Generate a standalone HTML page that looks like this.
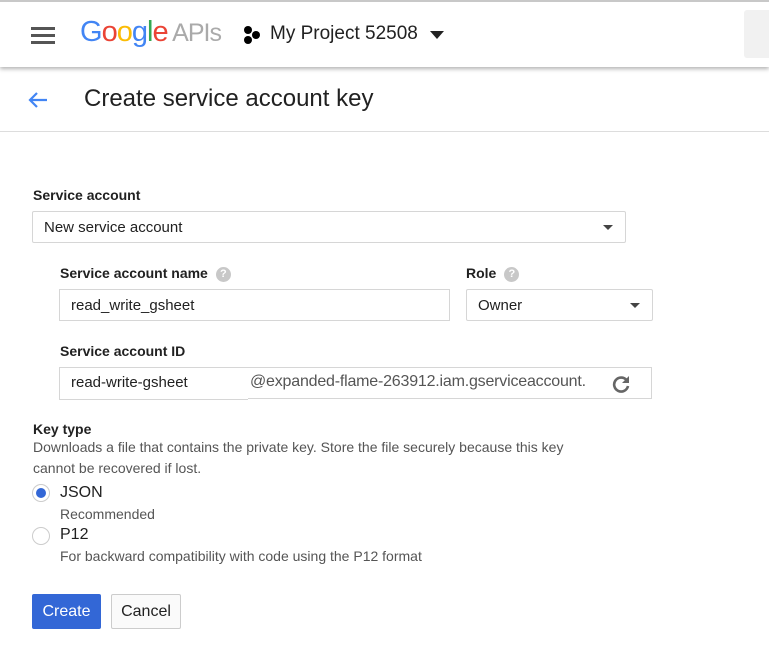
<!DOCTYPE html><html><head><style>
body{margin:0;width:769px;height:662px;background:#fff;font-family:"Liberation Sans",Arial,sans-serif;position:relative;overflow:hidden;color:#212121}
.a{position:absolute}
.box{position:absolute;border:1px solid #d6d6d6;box-sizing:border-box;font-size:15px;color:#212121;padding-left:11px;display:flex;align-items:center}
.lbl{position:absolute;font-size:14px;font-weight:bold;color:#212121}
.q{display:inline-block;width:15px;height:15px;border-radius:50%;background:#c8c8c8;color:#fff;font-size:11px;text-align:center;line-height:15px;vertical-align:1px;margin-left:8px}
.tri{position:absolute;width:0;height:0;border-left:5px solid transparent;border-right:5px solid transparent;border-top:5px solid #444}
</style></head><body>
<div class="a" style="left:0;top:0;width:769px;height:67px;background:#fff;border-top:2px solid #c8c8c8;box-sizing:border-box;box-shadow:0 2px 4px rgba(0,0,0,.3)"></div>
<div class="a" style="left:31px;top:27px;width:24px;height:3px;background:#555;box-shadow:0 7px 0 #555,0 14px 0 #555"></div>
<div class="a" style="left:80px;top:16px;font-size:29px;letter-spacing:-1px"><span style="color:#4285f4">G</span><span style="color:#ea4335">o</span><span style="color:#fbbc05">o</span><span style="color:#4285f4">g</span><span style="color:#34a853">l</span><span style="color:#ea4335">e</span><span style="color:#aaa;font-size:25px"> APIs</span></div>
<svg class="a" style="left:242px;top:25px" width="20" height="20"><circle cx="6" cy="5" r="4"/><circle cx="14" cy="10" r="4"/><circle cx="6" cy="15" r="4"/></svg>
<div class="a" style="left:270px;top:23px;font-size:19px;color:#212121">My Project 52508</div>
<div class="tri" style="left:430px;top:31px;border-left-width:7px;border-right-width:7px;border-top:8px solid #222"></div>
<div class="a" style="left:744px;top:10px;width:25px;height:48px;background:#f1f1f1;border-radius:3px 0 0 3px"></div>
<svg class="a" style="left:26px;top:88px" width="24" height="24"><path d="M21 12H4M11 5l-7 7 7 7" stroke="#4285f4" stroke-width="2.2" fill="none"/></svg>
<div class="a" style="left:84px;top:85px;font-size:24px;color:#212121">Create service account key</div>
<div class="a" style="left:0;top:131px;width:769px;height:1px;background:#ddd"></div>
<div class="lbl" style="left:33px;top:187px">Service account</div>
<div class="box" style="left:32px;top:211px;width:594px;height:32px;border-radius:2px">New service account</div>
<div class="tri" style="left:603px;top:225px"></div>
<div class="lbl" style="left:60px;top:265px">Service account name<span class="q">?</span></div>
<div class="box" style="left:59px;top:289px;width:391px;height:32px">read_write_gsheet</div>
<div class="lbl" style="left:466px;top:265px">Role<span class="q">?</span></div>
<div class="box" style="left:466px;top:289px;width:187px;height:32px;border-radius:2px">Owner</div>
<div class="tri" style="left:630px;top:303px"></div>
<div class="lbl" style="left:60px;top:343px">Service account ID</div>
<div class="box" style="left:59px;top:367px;width:593px;height:32px"></div>
<div class="a" style="left:59px;top:367px;width:189px;height:33px;border:1px solid #d6d6d6;border-right:none;box-sizing:border-box;background:#fff;font-size:15px;padding:6px 11px">read-write-gsheet</div>
<div class="a" style="left:250px;top:373px;font-size:16px;color:#555;letter-spacing:-0.2px">@expanded-flame-263912.iam.gserviceaccount.</div>
<svg class="a" style="left:610px;top:373px" width="22" height="22"><path d="M16.5 7A7 7 0 1 0 18 13" stroke="#666" stroke-width="2.6" fill="none"/><path d="M19 3v7h-7z" fill="#666"/></svg>
<div class="lbl" style="left:33px;top:421px">Key type</div>
<div class="a" style="left:33px;top:437px;font-size:14px;color:#555;line-height:21px;width:560px">Downloads a file that contains the private key. Store the file securely because this key cannot be recovered if lost.</div>
<div class="a" style="left:32px;top:484px;width:18px;height:18px;border:1px solid #ccc;border-radius:50%;box-sizing:border-box"><div class="a" style="left:3px;top:3px;width:10px;height:10px;border-radius:50%;background:#3367d6"></div></div>
<div class="a" style="left:60px;top:484px;font-size:16px">JSON</div>
<div class="a" style="left:60px;top:506px;font-size:14px;color:#555">Recommended</div>
<div class="a" style="left:32px;top:527px;width:18px;height:18px;border:1px solid #ccc;border-radius:50%;box-sizing:border-box"></div>
<div class="a" style="left:60px;top:526px;font-size:16px">P12</div>
<div class="a" style="left:60px;top:548px;font-size:14px;color:#555">For backward compatibility with code using the P12 format</div>
<div class="a" style="left:32px;top:594px;width:69px;height:35px;background:#3367d6;border-radius:2px;color:#fff;font-size:16px;text-align:center;line-height:35px">Create</div>
<div class="a" style="left:111px;top:594px;width:70px;height:35px;border:1px solid #ccc;box-sizing:border-box;background:#fafafa;border-radius:2px;font-size:16px;text-align:center;line-height:33px">Cancel</div>
</body></html>
